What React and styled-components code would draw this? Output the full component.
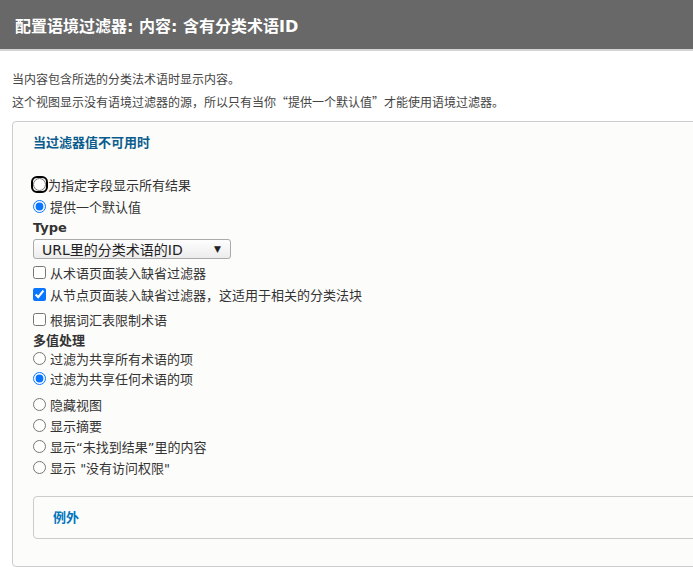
import React from "react";
import styled, { createGlobalStyle } from "styled-components";

const GlobalStyle = createGlobalStyle`
  html, body {
    margin: 0;
    padding: 0;
    background: #fff;
    overflow: hidden;
  }
  body {
    font-family: "DejaVu Sans", "Noto Sans CJK SC", sans-serif;
    color: #333;
  }
`;

const Header = styled.div`
  height: 49px;
  background: #686868;
  border-bottom: 2px solid #d4d4d4;
  display: flex;
  align-items: center;
  padding-left: 15px;
`;

const Title = styled.h1`
  margin: 0;
  font-size: 16px;
  font-weight: bold;
  color: #fff;
`;

const Body = styled.div`
  padding: 16px 0 0 12px;
`;

const Intro = styled.p`
  margin: 0;
  font-family: "Noto Sans CJK SC", "DejaVu Sans", sans-serif;
  font-size: 12px;
  line-height: 23px;
  color: #444;
`;

const Panel = styled.div`
  margin-top: 8px;
  width: 760px;
  height: 446px;
  background: #fcfcfa;
  border: 1px solid #ccc;
  border-radius: 4px;
  box-sizing: border-box;
  padding: 13px 0 0 20px;
`;

const Legend = styled.div`
  font-size: 13px;
  line-height: 16px;
  font-weight: bold;
  color: ${(p) => (p.$light ? "#0074bd" : "#0b5c8e")};
  margin-bottom: ${(p) => (p.$light ? 0 : 22)}px;
`;

const Row = styled.label`
  display: flex;
  align-items: center;
  height: ${(p) => p.$h || 22}px;
  margin-top: ${(p) => p.$mt || 0}px;
  font-size: 13px;
  color: #333;
`;

const Radio = styled.input.attrs({ type: "radio" })`
  margin: 0 4px 0 0;
  width: 13px;
  height: 13px;
  accent-color: #0a75ff;
`;

const FocusRing = styled.span`
  display: inline-flex;
  align-items: center;
  justify-content: center;
  width: 17px;
  height: 17px;
  box-sizing: border-box;
  margin: 0 0 0 -2px;
  border: 2px solid #000;
  border-radius: 6px;

  ${Radio} {
    margin: 0;
  }
`;

const Check = styled.input.attrs({ type: "checkbox" })`
  margin: 0 4px 0 0;
  width: 13px;
  height: 13px;
  accent-color: #0a75ff;
`;

const FieldLabel = styled.div`
  font-size: 13px;
  font-weight: bold;
  color: #333;
  line-height: 16px;
  margin-top: ${(p) => p.$top || 0}px;
`;

const Select = styled.div`
  width: 198px;
  height: 20px;
  box-sizing: border-box;
  margin: 3px 0 2px;
  border: 1px solid #aaa;
  border-radius: 3px;
  background: linear-gradient(#fefefe, #ececec);
  display: flex;
  align-items: center;
  justify-content: space-between;
  padding: 0 9px 0 8px;
  font-size: 14px;
  color: #222;
`;

const Arrow = styled.span`
  font-size: 9px;
  color: #222;
`;

const Sub = styled.div`
  margin-top: 18px;
  width: 720px;
  height: 43px;
  box-sizing: border-box;
  border: 1px solid #ccc;
  border-radius: 4px;
  display: flex;
  align-items: center;
  padding-left: 19px;
`;

export default function App() {
  return (
    <>
      <GlobalStyle />
      <Header>
        <Title>配置语境过滤器: 内容: 含有分类术语ID</Title>
      </Header>
      <Body>
        <Intro>当内容包含所选的分类法术语时显示内容。</Intro>
        <Intro>这个视图显示没有语境过滤器的源，所以只有当你“提供一个默认值”才能使用语境过滤器。</Intro>
        <Panel>
          <Legend>当过滤器值不可用时</Legend>
          <Row>
            <FocusRing>
              <Radio name="d" />
            </FocusRing>
            为指定字段显示所有结果
          </Row>
          <Row>
            <Radio name="d" defaultChecked />
            提供一个默认值
          </Row>
          <FieldLabel $top={3}>Type</FieldLabel>
          <Select>
            URL里的分类术语的ID
            <Arrow>▼</Arrow>
          </Select>
          <Row>
            <Check />
            从术语页面装入缺省过滤器
          </Row>
          <Row>
            <Check defaultChecked />
            从节点页面装入缺省过滤器，这适用于相关的分类法块
          </Row>
          <Row $h={28}>
            <Check />
            根据词汇表限制术语
          </Row>
          <FieldLabel>多值处理</FieldLabel>
          <Row $h={18}>
            <Radio name="m" />
            过滤为共享所有术语的项
          </Row>
          <Row>
            <Radio name="m" defaultChecked />
            过滤为共享任何术语的项
          </Row>
          <Row $mt={4}>
            <Radio name="x" />
            隐藏视图
          </Row>
          <Row $h={21}>
            <Radio name="x" />
            显示摘要
          </Row>
          <Row $h={21}>
            <Radio name="x" />
            显示“未找到结果”里的内容
          </Row>
          <Row $h={21}>
            <Radio name="x" />
            显示 "没有访问权限"
          </Row>
          <Sub>
            <Legend $light>例外</Legend>
          </Sub>
        </Panel>
      </Body>
    </>
  );
}
